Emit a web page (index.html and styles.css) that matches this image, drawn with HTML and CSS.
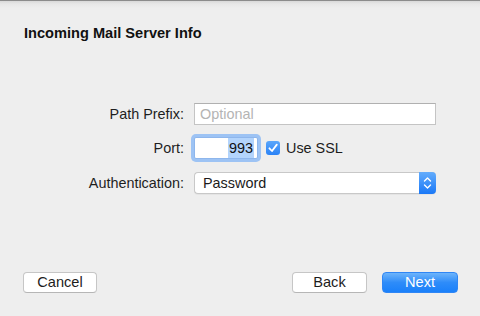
FILE: index.html
```html
<!DOCTYPE html>
<html>
<head>
<meta charset="utf-8">
<link rel="stylesheet" href="styles.css">
</head>
<body>
<div class="window">
  <h1 class="title">Incoming Mail Server Info</h1>
  <div class="form">
    <label class="label">Path Prefix:</label>
    <div class="control"><div class="field wide placeholder">Optional</div></div>
    <label class="label">Port:</label>
    <div class="control">
      <div class="field port focused"><span class="sel">993</span></div>
      <span class="checkbox"><svg width="14" height="14" viewBox="0 0 14 14"><path d="M3.4 7.3 L6 10 L10.8 3.6" fill="none" stroke="#fff" stroke-width="1.8" stroke-linecap="round" stroke-linejoin="round"/></svg></span>
      <span class="check-label">Use SSL</span>
    </div>
    <label class="label row3">Authentication:</label>
    <div class="control row3">
      <div class="popup">
        <span class="popup-text">Password</span>
        <span class="stepper"><svg width="17" height="22" viewBox="0 0 17 22"><path d="M5.5 9 L8.5 6 L11.5 9 M5.5 13 L8.5 16 L11.5 13" fill="none" stroke="#fff" stroke-width="1.4" stroke-linecap="round" stroke-linejoin="round"/></svg></span>
      </div>
    </div>
  </div>
  <div class="footer">
    <button class="btn">Cancel</button>
    <div class="spacer"></div>
    <button class="btn back">Back</button>
    <button class="btn primary">Next</button>
  </div>
</div>
</body>
</html>
```
FILE: styles.css
```css
html, body {
  margin: 0;
  padding: 0;
}
body {
  width: 480px;
  height: 316px;
  overflow: hidden;
  background: #eeeeee;
  font-family: "Liberation Sans", Arial, sans-serif;
  color: #1c1c1c;
}
.window {
  height: 316px;
  display: flex;
  flex-direction: column;
  box-sizing: border-box;
  border-top: 1px solid #8c8c8c;
  background: linear-gradient(#d9d9d9 0px, #e8e8e8 3px, #eeeeee 7px);
}
.title {
  margin: 24px 0 0 24px;
  font-size: 14.6px;
  line-height: 16px;
  font-weight: bold;
  color: #111;
}
.form {
  margin-top: 62px;
  display: grid;
  grid-template-columns: 184px auto;
  column-gap: 10px;
  row-gap: 12px;
  align-items: center;
}
.row3 {
  margin-top: 1px;
}
.label {
  text-align: right;
  font-size: 14.4px;
  line-height: 22px;
  color: #1e1e1e;
}
.control {
  display: flex;
  align-items: center;
  height: 22px;
}
.field {
  box-sizing: border-box;
  height: 22px;
  background: #fff;
  border: 1px solid #c4c4c4;
  border-top-color: #b0b0b0;
  font-size: 14.4px;
  line-height: 20px;
  padding: 0 5px;
}
.wide {
  width: 242px;
}
.placeholder {
  color: #b4b4b4;
}
.port {
  width: 64px;
  text-align: right;
  padding-right: 3px;
  color: #111;
}
.focused {
  border-color: #8eb6ec;
  box-shadow: 0 0 0 3px #9dc3f4;
  border-radius: 2px;
}
.sel {
  background: #b3d4fc;
  padding: 2px 1px 2px 1px;
}
.checkbox {
  margin-left: 8px;
  width: 14px;
  height: 14px;
  border-radius: 3px;
  background: linear-gradient(#5aa6fb, #2a82f6);
  display: flex;
}
.check-label {
  margin-left: 6px;
  font-size: 14.4px;
  color: #1c1c1c;
}
.popup {
  box-sizing: border-box;
  width: 242px;
  height: 22px;
  display: flex;
  background: #fff;
  border: 1px solid #c8c8c8;
  border-right: none;
  border-radius: 4px;
  box-shadow: 0 1px 0 rgba(0,0,0,0.04);
}
.popup-text {
  flex: 1;
  padding-left: 8px;
  font-size: 14.4px;
  line-height: 20px;
  color: #1a1a1a;
}
.stepper {
  width: 17px;
  margin: -1px 0;
  height: 22px;
  border-radius: 0 4px 4px 0;
  background: linear-gradient(#63acfc, #1a78f7);
  display: flex;
}
.footer {
  margin-top: auto;
  padding: 0 22px 23px 23px;
  display: flex;
  align-items: center;
}
.spacer {
  flex: 1;
}
.btn {
  box-sizing: border-box;
  width: 74px;
  height: 21px;
  padding: 0;
  background: #fff;
  border: 1px solid #c6c6c6;
  border-bottom-color: #b6b6b6;
  border-radius: 4px;
  font-family: "Liberation Sans", Arial, sans-serif;
  font-size: 14.6px;
  line-height: 19px;
  color: #1c1c1c;
}
.back {
  width: 75px;
  margin-right: 15px;
}
.primary {
  width: 76px;
  color: #fff;
  border: 1px solid #2f86f5;
  background: linear-gradient(#6db4fb, #2e8cf9 50%, #1a80fa);
}
```
